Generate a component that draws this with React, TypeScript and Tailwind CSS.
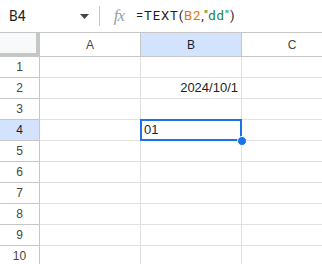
const cols = ["A", "B", "C"];
const rows = [1, 2, 3, 4, 5, 6, 7, 8, 9, 10];

const cellText: Record<string, { text: string; align: "left" | "right" }> = {
  B2: { text: "2024/10/1", align: "right" },
  B4: { text: "01", align: "left" },
};

export default function App() {
  return (
    <div className="w-[322px] h-[264px] overflow-hidden bg-white font-['Liberation_Sans',Arial,sans-serif] text-[#1f1f1f]">
      {/* formula bar */}
      <div className="flex items-center h-[33px] border-b border-[#c4c7c5]">
        <div className="w-[99px] flex items-center pl-[9px] pr-[10px]">
          <span className="text-[14px] font-['Roboto',sans-serif] text-[#1f1f1f]">B4</span>
          <svg className="ml-auto" width="9" height="5" viewBox="0 0 9 5">
            <path d="M0 0 L9 0 L4.5 5 Z" fill="#444746" />
          </svg>
        </div>
        <div className="w-px h-[20px] bg-[#c4c7c5]" />
        <div className="w-[36px] flex justify-center items-center pl-[2px]">
          <span className="font-['Liberation_Serif',serif] italic text-[17px] text-[#9aa0a6] tracking-[-1px]">fx</span>
        </div>
        <div className="text-[13px] font-['Roboto',sans-serif] tracking-[0.9px]">
          <span>=TEXT(</span>
          <span className="text-[#e37400]">B2</span>
          <span>,</span>
          <span className="text-[#188038]">"dd"</span>
          <span>)</span>
        </div>
      </div>

      {/* column headers */}
      <div className="flex h-[24px]">
        <div className="w-[40px] shrink-0 bg-[#f8f9fa] border-r-4 border-b-4 border-[#c4c7c5]" />
        {cols.map((c) => (
          <div
            key={c}
            className={`w-[101px] shrink-0 flex items-center justify-center border-r border-b border-[#c4c7c5] text-[12px] ${
              c === "B" ? "bg-[#d3e3fd] text-[#1f1f1f]" : "bg-white text-[#444746]"
            }`}
          >
            {c}
          </div>
        ))}
      </div>

      {/* rows */}
      <div className="relative">
        {rows.map((r) => (
          <div key={r} className="flex h-[21px]">
            <div
              className={`w-[40px] shrink-0 flex items-center justify-center border-r border-b border-[#c4c7c5] text-[12px] ${
                r === 4 ? "bg-[#d3e3fd] text-[#1f1f1f]" : "bg-white text-[#444746]"
              }`}
            >
              {r}
            </div>
            {cols.map((c) => {
              const cell = cellText[`${c}${r}`];
              return (
                <div
                  key={c}
                  className={`w-[101px] shrink-0 flex items-center border-r border-b border-[#e1e1e1] px-[3px] text-[13px] ${
                    cell?.align === "right" ? "justify-end" : "justify-start"
                  }`}
                >
                  {cell?.text}
                </div>
              );
            })}
          </div>
        ))}

        {/* selection B4 */}
        <div className="absolute left-[140px] top-[62px] w-[102px] h-[22px] border-2 border-[#1a73e8] pointer-events-none" />
        <div className="absolute left-[237px] top-[79px] w-[10px] h-[10px] rounded-full bg-[#1a73e8] border border-white" />
      </div>
    </div>
  );
}
